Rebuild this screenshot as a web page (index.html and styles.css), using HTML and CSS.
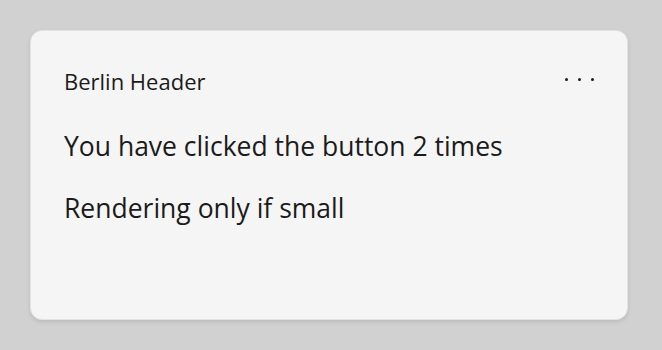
FILE: index.html
```html
<!DOCTYPE html>
<html>
<head>
<meta charset="utf-8">
<link rel="stylesheet" href="styles.css">
</head>
<body>
<div class="card">
  <div class="header">
    <span class="title">Berlin Header</span>
    <span class="more" aria-label="More options"><i></i><i></i><i></i></span>
  </div>
  <p class="line first">You have clicked the button 2 times</p>
  <p class="line">Rendering only if small</p>
</div>
</body>
</html>
```
FILE: styles.css
```css
html, body { margin: 0; padding: 0; }
body {
  background: #d1d1d1;
  width: 662px;
  height: 350px;
  padding: 30px;
  box-sizing: border-box;
  font-family: "Open Sans", "Noto Sans", sans-serif;
  color: #1b1b1b;
}
.card {
  box-sizing: border-box;
  width: 598px;
  height: 290px;
  background: #f5f5f5;
  border: 1px solid #e3e3e3;
  border-radius: 12px;
  box-shadow: 0 2px 4px rgba(0,0,0,0.1);
  padding: 34.5px 33px 0 33px;
}
.header {
  display: flex;
  justify-content: space-between;
  align-items: center;
}
.title { font-size: 22px; line-height: 30px; }
.more { display: flex; gap: 10px; margin-bottom: 3px; }
.more i { width: 3px; height: 3px; background: #1b1b1b; border-radius: 50%; }
.line { margin: 0; font-size: 26.5px; line-height: 62px; }
.first { margin-top: 19px; }
```
